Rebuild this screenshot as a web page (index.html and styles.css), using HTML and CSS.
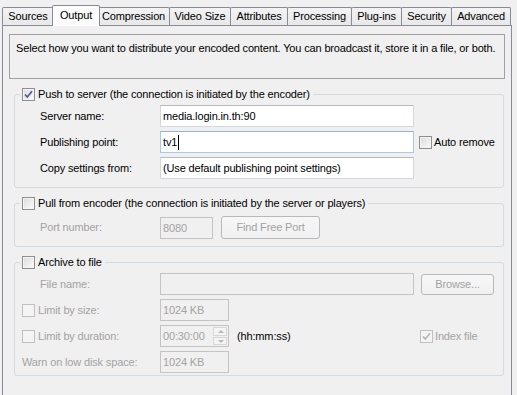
FILE: index.html
```html
<!DOCTYPE html>
<html>
<head>
<meta charset="utf-8">
<link rel="stylesheet" href="styles.css">
</head>
<body>
<div class="tabbar">
  <div class="tab w-sources">Sources</div>
  <div class="tab sel">Output</div>
  <div class="tab w-compression">Compression</div>
  <div class="tab w-video">Video Size</div>
  <div class="tab w-attr">Attributes</div>
  <div class="tab w-proc">Processing</div>
  <div class="tab w-plug">Plug-ins</div>
  <div class="tab w-sec">Security</div>
  <div class="tab w-adv">Advanced</div>
</div>
<div class="panel">
  <div class="desc">Select how you want to distribute your encoded content. You can broadcast it, store it in a file, or both.</div>

  <fieldset class="grp g1">
    <legend><span class="lg"><span class="cb"><svg width="11" height="11" viewBox="0 0 11 11"><path d="M2 5.5 L4.3 8 L9 2.3" fill="none" stroke="#4a5a96" stroke-width="1.7"/></svg></span><span>Push to server (the connection is initiated by the encoder)</span></span></legend>
    <div class="rows">
      <div class="row"><span class="lbl">Server name:</span><div class="inp w254">media.login.in.th:90</div></div>
      <div class="row"><span class="lbl">Publishing point:</span><div class="inp w254 focus">tv1<span class="caret"></span></div><span class="cb side"></span><span class="cbt">Auto remove</span></div>
      <div class="row"><span class="lbl">Copy settings from:</span><div class="inp w254">(Use default publishing point settings)</div></div>
    </div>
  </fieldset>

  <fieldset class="grp g2">
    <legend><span class="lg"><span class="cb"></span><span>Pull from encoder (the connection is initiated by the server or players)</span></span></legend>
    <div class="rows">
      <div class="row tall"><span class="lbl dis">Port number:</span><div class="inp dis w53">8080</div><div class="btn b-find">Find Free Port</div></div>
    </div>
  </fieldset>

  <fieldset class="grp g3">
    <legend><span class="lg"><span class="cb"></span><span>Archive to file</span></span></legend>
    <div class="rows">
      <div class="row"><span class="lbl dis">File name:</span><div class="inp dis w254"></div><div class="btn b-browse">Browse...</div></div>
      <div class="row"><span class="lbl cbl dis"><span class="cb off"></span><span>Limit by size:</span></span><div class="inp dis w69">1024 KB</div></div>
      <div class="row"><span class="lbl cbl dis"><span class="cb off"></span><span>Limit by duration:</span></span><div class="inp dis w69 spin"><span class="val">00:30:00</span><span class="spinner"><span class="up"></span><span class="dn"></span></span></div><span class="hint">(hh:mm:ss)</span><span class="cb off"><svg width="11" height="11" viewBox="0 0 11 11"><path d="M2 5.5 L4.3 8 L9 2.3" fill="none" stroke="#b4b4b4" stroke-width="1.5"/></svg></span><span class="cbt dis">Index file</span></div>
      <div class="row"><span class="lbl cbl dis">Warn on low disk space:</span><div class="inp dis w69">1024 KB</div></div>
    </div>
  </fieldset>
</div>
</body>
</html>
```

FILE: styles.css
```css
html, body {
  margin: 0;
  background: #f0f0f0;
  font: 11px/13px "Liberation Sans", Arial, sans-serif;
  letter-spacing: -0.15px;
  color: #000;
  overflow: hidden;
  height: 395px;
}

.tabbar {
  display: flex;
  align-items: flex-end;
  height: 25px;
  padding-left: 2px;
}

.tab {
  box-sizing: border-box;
  height: 18px;
  border: 1px solid #898c95;
  border-bottom: none;
  border-radius: 2px 2px 0 0;
  background: linear-gradient(#f3f3f3, #e8e8e8);
  margin-right: -1px;
  text-align: center;
  line-height: 16px;
  white-space: nowrap;
  flex: none;
}

.tab.sel {
  width: 48px;
  height: 21px;
  margin: 0 -3px -1px -1px;
  background: #fcfcfc;
  line-height: 18px;
  z-index: 1;
}

.w-sources { width: 52px; }
.w-compression { width: 73px; }
.w-video { width: 62px; }
.w-attr { width: 58px; }
.w-proc { width: 65px; }
.w-plug { width: 51px; }
.w-sec { width: 51px; }
.w-adv { width: 60px; }

.panel {
  margin: 0 5px 0 2px;
  border: 1px solid #898c95;
  padding: 8px 6px;
  height: 353px;
  background: #f0f0f0;
}

.desc {
  box-sizing: border-box;
  height: 45px;
  border: 1px solid #a0a0a0;
  padding: 7px 6px 0;
  white-space: nowrap;
}

.grp {
  margin: 9px 1px 0 5px;
  border: 1px solid #d3dbe1;
  border-radius: 3px;
  padding: 0 0 8px 0;
  min-width: 0;
}

.g2 { padding-bottom: 7px; }
.g3 { padding-bottom: 2px; }

legend {
  margin-left: 5px;
  padding: 0 3px 0 2px;
}

.lg {
  display: flex;
  align-items: center;
  gap: 3px;
  height: 13px;
  line-height: 13px;
  white-space: nowrap;
}

.cb {
  box-sizing: border-box;
  width: 13px;
  height: 13px;
  flex: none;
  border: 1px solid #8e8f8f;
  background: linear-gradient(135deg, #dcdcdc, #fbfbfb);
  box-shadow: inset 0 0 0 1px #f4f4f4;
  display: flex;
  align-items: center;
  justify-content: center;
}

.cb.off {
  border-color: #c0c0c0;
  background: #f4f4f4;
  box-shadow: none;
}

.rows {
  display: flex;
  flex-direction: column;
  gap: 4px;
  padding-top: 4px;
}

.g2 .rows { padding-top: 6px; }

.row {
  display: flex;
  align-items: center;
  height: 22px;
}

.row.tall { height: 23px; }

.lbl {
  box-sizing: border-box;
  width: 145px;
  padding-left: 25px;
  flex: none;
  white-space: nowrap;
}

.lbl.cbl {
  padding-left: 7px;
  display: flex;
  align-items: center;
  gap: 3px;
}

.dis { color: #a3a3a3; }

.inp {
  box-sizing: border-box;
  height: 22px;
  border: 1px solid #d3d8de;
  border-top-color: #b5b9c0;
  background: #fff;
  padding: 0 2px;
  line-height: 20px;
  white-space: nowrap;
  overflow: hidden;
  flex: none;
}

.inp.focus {
  border-color: #a9c9eb;
  border-top-color: #8fb3d9;
}

.inp.dis {
  background: #f0f0f0;
  border-color: #c4c4c4;
}

.w254 { width: 254px; }
.w53 { width: 53px; }
.w69 { width: 69px; }

.caret {
  display: inline-block;
  width: 1px;
  height: 15px;
  background: #000;
  vertical-align: -4px;
  margin-left: 1px;
}

.side { margin-left: 5px; }

.cbt { margin-left: 2px; white-space: nowrap; }

.btn {
  box-sizing: border-box;
  border: 1px solid #b6b9bc;
  border-radius: 3px;
  background: linear-gradient(#f7f7f7, #f0f0f0);
  color: #a3a3a3;
  text-align: center;
  flex: none;
}

.b-find {
  width: 99px;
  height: 23px;
  line-height: 21px;
  margin-left: 8px;
}

.b-browse {
  width: 73px;
  height: 21px;
  line-height: 19px;
  margin-left: 7px;
}

.spin {
  display: flex;
  align-items: stretch;
  padding-right: 1px;
}

.val { flex: 1; }

.spinner {
  width: 14px;
  display: flex;
  flex-direction: column;
  padding: 1px 0;
  gap: 1px;
}

.spinner span {
  flex: 1;
  border: 1px solid #d6d6d6;
  background: #f4f4f4;
  position: relative;
}

.spinner .up::after,
.spinner .dn::after {
  content: "";
  position: absolute;
  left: 4px;
  top: 2px;
  border-left: 3px solid transparent;
  border-right: 3px solid transparent;
}

.spinner .up::after { border-bottom: 3px solid #b8b8b8; }
.spinner .dn::after { border-top: 3px solid #b8b8b8; }

.hint {
  box-sizing: border-box;
  width: 191px;
  padding-left: 8px;
  flex: none;
  white-space: nowrap;
}
```
